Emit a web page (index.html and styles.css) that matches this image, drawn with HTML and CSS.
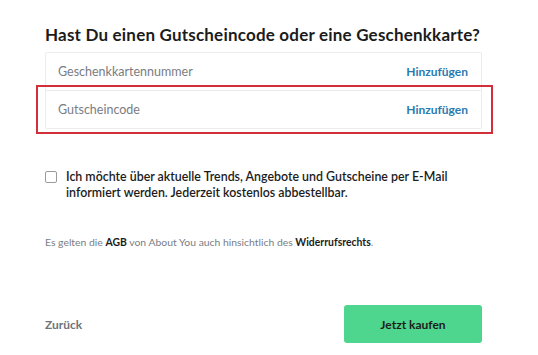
FILE: index.html
```html
<!DOCTYPE html>
<html lang="de">
<head>
    <meta charset="UTF-8">
    <meta name="viewport" content="width=device-width, initial-scale=1.0">
    <title>Gutschein</title>
    <link rel="stylesheet" href="styles.css">
</head>
<body>
    <div class="checkout">
        <h2 class="title">Hast Du einen Gutscheincode oder eine Geschenkkarte?</h2>

        <div class="codes">
            <div class="code-row">
                <span class="code-label">Geschenkkartennummer</span>
                <a class="code-add" href="#">Hinzufügen</a>
            </div>
            <div class="code-row highlighted">
                <span class="code-label">Gutscheincode</span>
                <a class="code-add" href="#">Hinzufügen</a>
            </div>
        </div>

        <label class="newsletter">
            <span class="box"></span>
            <span>Ich möchte über aktuelle Trends, Angebote und Gutscheine per E-Mail informiert werden. Jederzeit kostenlos abbestellbar.</span>
        </label>

        <p class="terms">Es gelten die <b>AGB</b> von About You auch hinsichtlich des <b>Widerrufsrechts</b>.</p>

        <div class="actions">
            <a class="back" href="#">Zurück</a>
            <button class="buy">Jetzt kaufen</button>
        </div>
    </div>
</body>
</html>
```

FILE: styles.css
```css
body {
    margin: 0;
    font-family: Lato, "Liberation Sans", sans-serif;
    background: white;
    color: #1a1a1a;
}
.checkout {
    width: 437px;
    margin-left: 45px;
    padding-top: 24px;
}
.title {
    margin: 0;
    font-size: 17px;
    font-weight: 700;
    line-height: 22px;
    letter-spacing: 0.2px;
    white-space: nowrap;
    color: #1c1c1c;
}
.codes {
    margin-top: 6px;
    border: 1px solid #ececec;
    border-radius: 2px;
}
.code-row {
    display: flex;
    justify-content: space-between;
    align-items: center;
    height: 37px;
    padding: 0 13px 0 12px;
    position: relative;
}
.code-row + .code-row {
    border-top: 1px solid #ececec;
}
.highlighted::after {
    content: "";
    position: absolute;
    left: -10px;
    right: -12px;
    top: -6px;
    bottom: -6px;
    border: 2px solid #d32f3a;
}
.code-label {
    font-size: 12.5px;
    color: #7a7d82;
}
.code-add {
    font-size: 12px;
    font-weight: 700;
    color: #2a7ab0;
    text-decoration: none;
}
.newsletter {
    display: flex;
    gap: 9px;
    margin-top: 40px;
    font-size: 12.4px;
    line-height: 16px;
    color: #1c1c1c;
    font-weight: 600;
}
.box {
    flex: none;
    width: 10px;
    height: 10px;
    margin-top: 2px;
    border: 1px solid #9a9a9a;
    border-radius: 2px;
}
.terms {
    margin: 35px 0 0;
    font-size: 10.4px;
    color: #7a7d82;
}
.terms b {
    color: #1c1c1c;
}
.actions {
    display: flex;
    justify-content: space-between;
    align-items: center;
    margin-top: 57px;
}
.back {
    font-size: 12px;
    font-weight: 700;
    color: #6f737a;
    text-decoration: none;
}
.buy {
    width: 138px;
    height: 38px;
    border: none;
    border-radius: 3px;
    background: #4fd68e;
    color: #1c1c1c;
    font-family: inherit;
    font-size: 12px;
    font-weight: 700;
}
```
